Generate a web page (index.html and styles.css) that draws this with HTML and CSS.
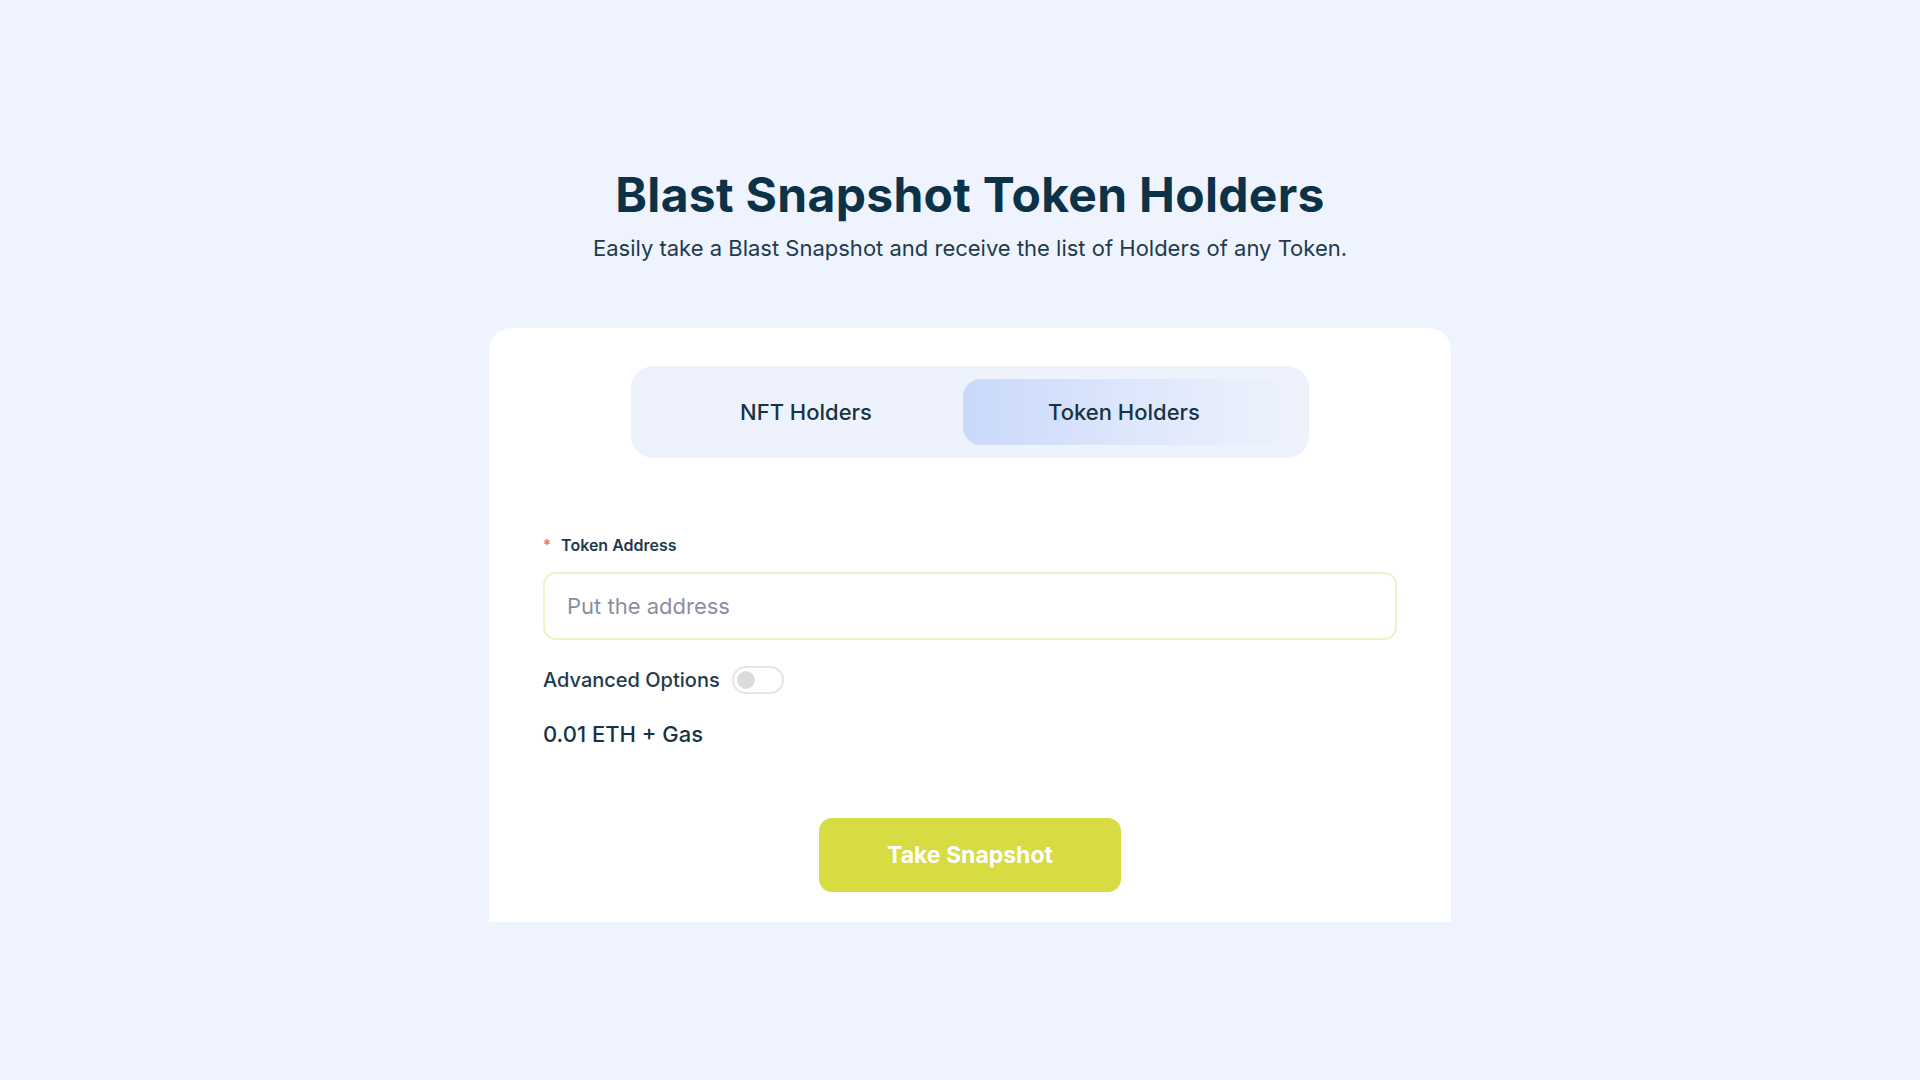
FILE: index.html
```html
<!DOCTYPE html>
<html lang="en">
<head>
<meta charset="utf-8">
<title>Blast Snapshot Token Holders</title>
<link rel="stylesheet" href="styles.css">
</head>
<body>
<div class="page">
  <header class="hero">
    <h1 class="title">Blast Snapshot Token Holders</h1>
    <p class="subtitle">Easily take a Blast Snapshot and receive the list of Holders of any Token.</p>
  </header>
  <section class="card">
    <div class="tabs">
      <div class="tab tab-first">NFT Holders</div>
      <div class="tab tab-active">Token Holders</div>
    </div>
    <form class="form">
      <label class="label"><span class="req">*</span>Token Address</label>
      <input class="input" type="text" placeholder="Put the address">
      <div class="adv">
        <span class="adv-text">Advanced Options</span>
        <span class="switch"><span class="knob"></span></span>
      </div>
      <div class="price">0.01 ETH + Gas</div>
      <div class="actions">
        <button type="button" class="btn">Take Snapshot</button>
      </div>
    </form>
  </section>
</div>
</body>
</html>
```

FILE: styles.css
```css
* { box-sizing: border-box; }
html, body { margin: 0; padding: 0; }
body {
  background: #eff3fe;
  font-family: Inter, "Noto Sans", sans-serif;
  color: #0e3349;
  min-height: 1080px;
}
.page {
  padding-left: 20px;
  padding-top: 166px;
  display: flex;
  flex-direction: column;
  align-items: center;
}
.hero { text-align: center; }
.title {
  margin: 0;
  font-size: 48px;
  line-height: 58px;
  font-weight: 700;
  letter-spacing: 0.3px;
  color: #0c3248;
}
.subtitle {
  margin: 10px 0 0;
  font-size: 22px;
  line-height: 28px;
  color: #213b4d;
  font-weight: 400;
}
.card {
  margin-top: 66px;
  width: 962px;
  height: 594px;
  background: #ffffff;
  border-radius: 22px 22px 0 0;
  padding: 38px 54px 0;
}
.tabs {
  width: 678px;
  height: 92px;
  margin: 0 auto;
  background: #eef2fd;
  border-radius: 22px;
  padding: 13px 14px;
  display: grid;
  grid-template-columns: 310px 1fr;
  gap: 8px;
}
.tab {
  display: flex;
  align-items: center;
  justify-content: center;
  font-size: 22px;
  font-weight: 500;
  color: #173447;
  border-radius: 18px;
}
.tab-first { padding-left: 12px; }
.tab-active {
  padding-right: 10px;
  background: linear-gradient(90deg, #c9d9fa 0%, #dfe8fc 55%, #eef2fd 100%);
}
.form {
  margin-top: 77px;
  display: flex;
  flex-direction: column;
}
.label {
  font-size: 16px;
  line-height: 20px;
  font-weight: 600;
  color: #1e3a4b;
  display: flex;
  align-items: center;
}
.req {
  color: #f06a6a;
  margin-right: 10px;
  font-size: 15px;
}
.input {
  margin-top: 17px;
  height: 68px;
  width: 100%;
  border: 2px solid #edf2c7;
  border-radius: 13px;
  padding: 0 22px;
  font-family: inherit;
  font-size: 22px;
  color: #1e3a4b;
  background: #fff;
  outline: none;
}
.input::placeholder { color: #8a8f9f; }
.adv {
  margin-top: 24px;
  display: flex;
  align-items: center;
  gap: 12px;
  height: 32px;
}
.adv-text {
  font-size: 20px;
  font-weight: 500;
  color: #1e3a4b;
}
.switch {
  width: 52px;
  height: 28px;
  border-radius: 14px;
  border: 2px solid #e6e6e6;
  background: #fff;
  position: relative;
  display: inline-block;
}
.knob {
  position: absolute;
  left: 3px;
  top: 3px;
  width: 18px;
  height: 18px;
  border-radius: 50%;
  background: #dcdcdc;
}
.price {
  margin-top: 25px;
  font-size: 22px;
  line-height: 26px;
  font-weight: 500;
  color: #173447;
}
.actions {
  margin-top: 71px;
  display: flex;
  justify-content: center;
}
.btn {
  width: 302px;
  height: 74px;
  border: none;
  border-radius: 13px;
  background: #d6dc42;
  color: #ffffff;
  font-family: inherit;
  font-size: 23px;
  font-weight: 700;
  cursor: pointer;
}
```
